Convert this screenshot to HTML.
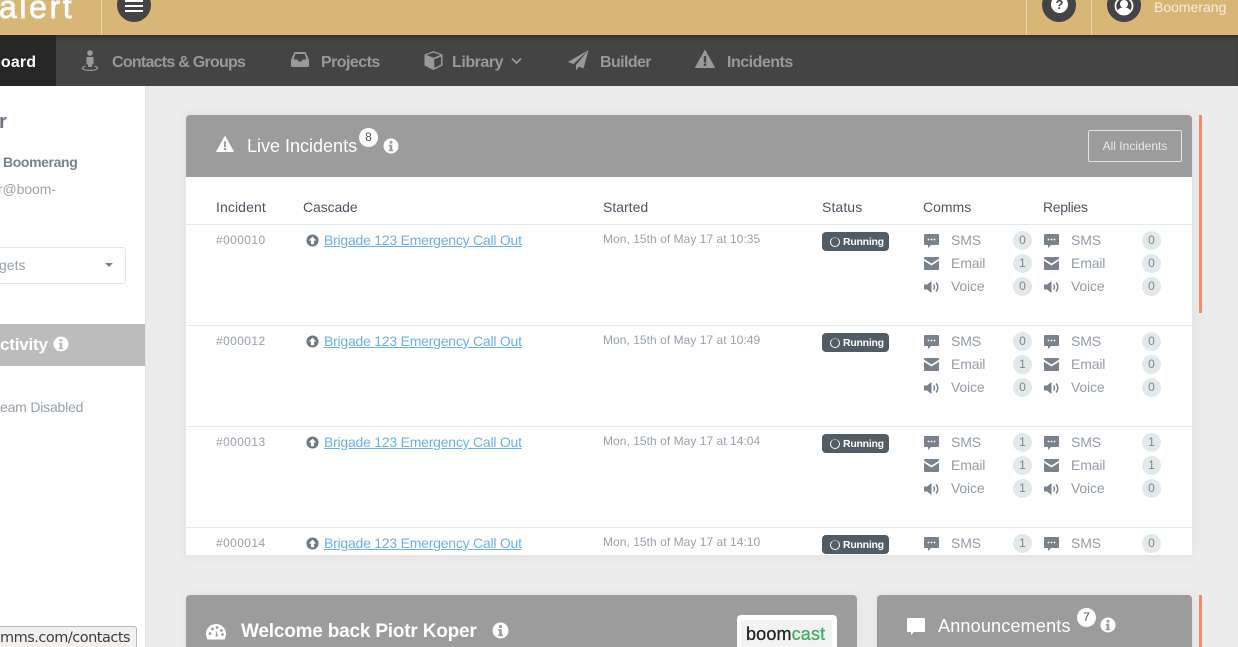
<!DOCTYPE html>
<html><head><meta charset="utf-8"><style>
html{margin:0;padding:0;width:1238px;height:647px;overflow:hidden}
body{margin:0;padding:0;width:1238px;height:647px;position:relative;overflow:hidden;background:#ececec;font-family:"Liberation Sans",sans-serif;color:#4a5560}
.a,.t,svg.i{position:absolute}
.t{white-space:nowrap;line-height:20px}
.row{position:absolute;left:0;width:1006px;height:101px;border-top:1px solid #e4e9ec}
.id{left:30px;top:5px;font-size:12px;color:#98a0a8;letter-spacing:.4px}
.lk{left:138px;top:5px;font-size:14px;color:#6cb0e8;text-decoration:underline;letter-spacing:-.23px}
.dt{left:417px;top:4px;font-size:12px;color:#98a1aa;letter-spacing:.04px}
.badge{position:absolute;left:636px;top:7px;width:67px;height:19px;background:#515c65;border-radius:4px}
.badge b{position:absolute;left:21px;top:0;font-size:10.5px;line-height:20px;color:#fff;font-weight:bold;letter-spacing:-.25px}
.badge i{position:absolute;left:8px;top:5px;width:8px;height:8px;border:1.5px solid #fff;border-radius:50%;border-top-color:#9aa3aa}
.l{font-size:14px;color:#949ca5;letter-spacing:-.15px;margin-top:-1px}
.n{position:absolute;width:19px;height:19px;border-radius:50%;background:#e3e8eb;color:#7d8791;font-size:12px;line-height:18px;text-align:center;margin-top:1px}
.h{top:82px;font-size:14px;color:#4d5761}
.nav{top:53px;font-size:16px;font-weight:bold;color:#999}
</style></head><body>
<svg width="0" height="0" style="position:absolute"><defs>
<symbol id="sms" viewBox="0 0 15 14"><path d="M1 0h13a1 1 0 0 1 1 1v9a1 1 0 0 1-1 1H7l-3 3v-3H1a1 1 0 0 1-1-1V1a1 1 0 0 1 1-1z" fill="#7a838d"/><circle cx="4.500" cy="5.500" r=".9" fill="#fff"/><circle cx="7.500" cy="5.500" r=".9" fill="#fff"/><circle cx="10.500" cy="5.500" r=".9" fill="#fff"/></symbol>
<symbol id="mail" viewBox="0 0 15 13"><path d="M1 0h13a1 1 0 0 1 1 1v.8L7.500 6.500 0 1.800V1a1 1 0 0 1 1-1z" fill="#7a838d"/><path d="M0 3.800l7.500 4.700L15 3.800V12a1 1 0 0 1-1 1H1a1 1 0 0 1-1-1z" fill="#7a838d"/></symbol>
<symbol id="vol" viewBox="0 0 15 12"><path d="M0 3.500h3L7.500 0v12L3 8.500H0z" fill="#7a838d"/><path d="M9.500 3.500c1.300 1.400 1.300 3.600 0 5" stroke="#7a838d" stroke-width="1.500" fill="none"/><path d="M12 1.500c2.300 2.500 2.300 6.500 0 9" stroke="#7a838d" stroke-width="1.500" fill="none"/></symbol>
<symbol id="up" viewBox="0 0 14 14"><circle cx="7" cy="7" r="6.500" fill="#6e7882"/><path d="M7 2.800L11 7H8.700v4H5.300V7H3z" fill="#fff"/></symbol>
<symbol id="info" viewBox="0 0 16 16"><circle cx="8" cy="8" r="7.500" fill="#fff"/><circle cx="8" cy="4.200" r="1.500" fill="var(--c,#9c9c9c)"/><path d="M5.800 6.800h3.400v5h1.100v1.500H5.700v-1.500h1V8.300h-.9z" fill="var(--c,#9c9c9c)"/></symbol>
<symbol id="warn" viewBox="0 0 20 18"><path d="M10 .5L19.500 17.500H.5z" fill="currentColor" stroke="currentColor" stroke-linejoin="round"/><rect x="8.800" y="6" width="2.400" height="6.500" fill="var(--c)"/><rect x="8.800" y="13.500" width="2.400" height="2.400" fill="var(--c)"/></symbol>
</defs></svg>

<!-- top bar -->
<div class="a" style="left:0;top:0;width:1238px;height:35px;background:#d8b676"></div>
<div class="t" style="left:-1px;top:-13px;font-size:32px;line-height:40px;color:#fff;letter-spacing:2.6px;-webkit-text-stroke:.7px #fff">alert</div>
<div class="a" style="left:101px;top:0;width:1px;height:35px;background:#e9d5ad"></div>
<div class="a" style="left:117px;top:-12px;width:34px;height:34px;border-radius:50%;background:#444"></div>
<div class="a" style="left:125px;top:0;width:18px;height:2px;background:#fff"></div>
<div class="a" style="left:125px;top:5px;width:18px;height:2px;background:#fff"></div>
<div class="a" style="left:125px;top:10px;width:18px;height:2px;background:#fff"></div>
<div class="a" style="left:1026px;top:0;width:1px;height:35px;background:#e9d5ad"></div>
<div class="a" style="left:1042px;top:-12px;width:34px;height:34px;border-radius:50%;background:#444"></div>
<div class="a" style="left:1051px;top:-4px;width:17px;height:17px;border-radius:50%;background:#fff"></div>
<div class="t" style="left:1051px;top:-5px;width:17px;text-align:center;font-size:13px;font-weight:bold;color:#444">?</div>
<div class="a" style="left:1091px;top:0;width:1px;height:35px;background:#e9d5ad"></div>
<div class="a" style="left:1107px;top:-12px;width:34px;height:34px;border-radius:50%;background:#444"></div>
<svg class="i" style="left:1114px;top:-4px" width="20" height="20" viewBox="0 0 20 20"><circle cx="10" cy="10" r="8.500" fill="none" stroke="#fff" stroke-width="1.800"/><circle cx="10" cy="8" r="4" fill="#fff"/><path d="M3.500 15c1-2.500 3-3.500 6.500-3.500s5.500 1 6.500 3.500a8 8 0 0 1-13 0z" fill="#fff"/></svg>
<div class="t" style="left:1154px;top:-3px;font-size:14px;color:#f5eedd">Boomerang</div>

<!-- nav -->
<div class="a" style="left:0;top:35px;width:1238px;height:51px;background:#444;box-shadow:inset 0 4px 4px -2px #2e2e2e"></div>
<div class="a" style="left:0;top:35px;width:56px;height:51px;background:#262626"></div>
<div class="t" style="left:-9px;top:53px;font-size:16px;font-weight:bold;color:#fff;letter-spacing:.15px">board</div>
<svg class="i" style="left:81px;top:50px" width="18" height="22" viewBox="0 0 18 22"><circle cx="9" cy="3" r="2.800" fill="#999"/><path d="M5.500 7h7v7.500h-1.500V17H7v-2.500H5.500z" fill="#999"/><path d="M4.500 15.500C2 16.300.8 17.200.8 18.200c0 1.500 3.600 2.800 8.200 2.800s8.200-1.300 8.200-2.800c0-1-1.200-1.900-3.700-2.700v1.200c1.500.4 2.200 1 2.200 1.500 0 .8-2.700 1.600-6.700 1.600s-6.700-.8-6.700-1.600c0-.5.700-1.100 2.200-1.500z" fill="#999"/></svg>
<div class="t nav" style="left:112px;letter-spacing:-.74px">Contacts &amp; Groups</div>
<svg class="i" style="left:291px;top:52px" width="18" height="15" viewBox="0 0 18 15"><path d="M3.500 0h11L18 8v5.500a1.500 1.500 0 0 1-1.500 1.500h-15A1.500 1.500 0 0 1 0 13.500V8zM4.500 2L2.500 7.500h4l1 2h3l1-2h4L13.500 2z" fill="#999" fill-rule="evenodd"/></svg>
<div class="t nav" style="left:321px;letter-spacing:-.55px">Projects</div>
<svg class="i" style="left:424px;top:50px" width="19" height="21" viewBox="0 0 19 21"><path d="M9.500 1L18.500 4.500V15.500L9.500 20 .5 15.500V4.500z" fill="#999"/><path d="M2.500 5l7 2.800 7-2.800-7-2.500z" fill="#444"/><path d="M10.300 9.300l6.700-2.700v8L10.300 18z" fill="#444"/></svg>
<div class="t nav" style="left:452px;letter-spacing:-.45px">Library</div>
<svg class="i" style="left:511px;top:57px" width="11" height="8" viewBox="0 0 11 8"><path d="M1 1.500l4.500 4.500L10 1.500" fill="none" stroke="#999" stroke-width="1.800"/></svg>
<svg class="i" style="left:568px;top:50px" width="21" height="21" viewBox="0 0 21 21"><path d="M20.500 0L0 12l5.500 2L20.500 0 8 15v5.500l3-4 4.500 2z" fill="#999"/></svg>
<div class="t nav" style="left:600px;letter-spacing:-.6px">Builder</div>
<svg class="i" style="left:695px;top:50px;color:#999;--c:#444" width="20" height="18"><use href="#warn"/></svg>
<div class="t nav" style="left:727px;letter-spacing:-.5px">Incidents</div>

<!-- sidebar -->
<div class="a" style="left:0;top:86px;width:145px;height:561px;background:#fff;border-right:1px solid #e4e4e4"></div>
<div class="t" style="left:-1px;top:112px;font-size:20px;font-weight:bold;color:#6d7781">r</div>
<div class="t" style="left:3px;top:152px;font-size:14px;font-weight:bold;color:#79838d;letter-spacing:-.38px">Boomerang</div>
<div class="t" style="left:-2px;top:179px;font-size:14px;color:#9aa2aa;letter-spacing:-.1px">r@boom-</div>
<div class="a" style="left:-10px;top:247px;width:134px;height:35px;border:1px solid #e4e8eb;border-radius:3px;background:#fff"></div>
<div class="t" style="left:-1px;top:255px;font-size:14px;color:#9aa2aa">gets</div>
<div class="a" style="left:105px;top:263px;width:0;height:0;border-left:4px solid transparent;border-right:4px solid transparent;border-top:4px solid #79838d"></div>
<div class="a" style="left:0;top:324px;width:145px;height:42px;background:#bcbcbc"></div>
<div class="t" style="left:0;top:335px;font-size:17px;font-weight:bold;color:#fff;letter-spacing:-.2px">ctivity</div>
<svg class="i" style="left:53px;top:336px;--c:#bcbcbc" width="16" height="16"><use href="#info"/></svg>
<div class="t" style="left:0;top:397px;font-size:14px;color:#98a0a8;letter-spacing:-.2px">eam Disabled</div>

<!-- live incidents panel -->
<div class="a" style="left:186px;top:115px;width:1006px;height:440px;background:#fff;border-radius:4px 4px 0 0;overflow:hidden;box-shadow:0 0 14px rgba(0,0,0,.06)">
  <div class="a" style="left:0;top:0;width:1006px;height:62px;background:#9c9c9c"></div>
  <svg class="i" style="left:30px;top:21px;color:#fff;--c:#9c9c9c" width="18" height="16"><use href="#warn"/></svg>
  <div class="t" style="left:61px;top:21px;font-size:18px;color:#fff">Live Incidents</div>
  <div class="a" style="left:173px;top:13px;width:19px;height:19px;border-radius:50%;background:#fff;color:#4a5560;font-size:12px;line-height:18px;text-align:center">8</div>
  <svg class="i" style="left:197px;top:23px" width="16" height="16"><use href="#info"/></svg>
  <div class="a" style="left:902px;top:15px;width:92px;height:30px;border:1px solid #e0e4e6;border-radius:2px;color:#e6e9ea;font-size:12px;line-height:30px;text-align:center">All Incidents</div>

  <div class="t h" style="left:30px;letter-spacing:.1px">Incident</div>
  <div class="t h" style="left:117px;letter-spacing:-.1px">Cascade</div>
  <div class="t h" style="left:417px">Started</div>
  <div class="t h" style="left:636px;letter-spacing:.1px">Status</div>
  <div class="t h" style="left:737px">Comms</div>
  <div class="t h" style="left:857px;letter-spacing:-.3px">Replies</div>

  <div class="row" style="top:109px">
    <div class="t id">#000010</div><svg class="i" style="left:120px;top:9px" width="13" height="13"><use href="#up"/></svg><div class="t lk">Brigade 123 Emergency Call Out</div><div class="t dt">Mon, 15th of May 17 at 10:35</div>
    <div class="badge"><i></i><b>Running</b></div>
    <svg class="i" style="left:738px;top:9px" width="15" height="14"><use href="#sms"/></svg><div class="t l" style="left:765px;top:6px">SMS</div><div class="n" style="left:827px;top:5px">0</div>
    <svg class="i" style="left:738px;top:32px" width="15" height="13"><use href="#mail"/></svg><div class="t l" style="left:765px;top:29px">Email</div><div class="n" style="left:827px;top:28px">1</div>
    <svg class="i" style="left:738px;top:56px" width="15" height="12"><use href="#vol"/></svg><div class="t l" style="left:765px;top:52px">Voice</div><div class="n" style="left:827px;top:51px">0</div>
    <svg class="i" style="left:858px;top:9px" width="15" height="14"><use href="#sms"/></svg><div class="t l" style="left:885px;top:6px">SMS</div><div class="n" style="left:956px;top:5px">0</div>
    <svg class="i" style="left:858px;top:32px" width="15" height="13"><use href="#mail"/></svg><div class="t l" style="left:885px;top:29px">Email</div><div class="n" style="left:956px;top:28px">0</div>
    <svg class="i" style="left:858px;top:56px" width="15" height="12"><use href="#vol"/></svg><div class="t l" style="left:885px;top:52px">Voice</div><div class="n" style="left:956px;top:51px">0</div>
  </div>
  <div class="row" style="top:210px">
    <div class="t id">#000012</div><svg class="i" style="left:120px;top:9px" width="13" height="13"><use href="#up"/></svg><div class="t lk">Brigade 123 Emergency Call Out</div><div class="t dt">Mon, 15th of May 17 at 10:49</div>
    <div class="badge"><i></i><b>Running</b></div>
    <svg class="i" style="left:738px;top:9px" width="15" height="14"><use href="#sms"/></svg><div class="t l" style="left:765px;top:6px">SMS</div><div class="n" style="left:827px;top:5px">0</div>
    <svg class="i" style="left:738px;top:32px" width="15" height="13"><use href="#mail"/></svg><div class="t l" style="left:765px;top:29px">Email</div><div class="n" style="left:827px;top:28px">1</div>
    <svg class="i" style="left:738px;top:56px" width="15" height="12"><use href="#vol"/></svg><div class="t l" style="left:765px;top:52px">Voice</div><div class="n" style="left:827px;top:51px">0</div>
    <svg class="i" style="left:858px;top:9px" width="15" height="14"><use href="#sms"/></svg><div class="t l" style="left:885px;top:6px">SMS</div><div class="n" style="left:956px;top:5px">0</div>
    <svg class="i" style="left:858px;top:32px" width="15" height="13"><use href="#mail"/></svg><div class="t l" style="left:885px;top:29px">Email</div><div class="n" style="left:956px;top:28px">0</div>
    <svg class="i" style="left:858px;top:56px" width="15" height="12"><use href="#vol"/></svg><div class="t l" style="left:885px;top:52px">Voice</div><div class="n" style="left:956px;top:51px">0</div>
  </div>
  <div class="row" style="top:311px">
    <div class="t id">#000013</div><svg class="i" style="left:120px;top:9px" width="13" height="13"><use href="#up"/></svg><div class="t lk">Brigade 123 Emergency Call Out</div><div class="t dt">Mon, 15th of May 17 at 14:04</div>
    <div class="badge"><i></i><b>Running</b></div>
    <svg class="i" style="left:738px;top:9px" width="15" height="14"><use href="#sms"/></svg><div class="t l" style="left:765px;top:6px">SMS</div><div class="n" style="left:827px;top:5px">1</div>
    <svg class="i" style="left:738px;top:32px" width="15" height="13"><use href="#mail"/></svg><div class="t l" style="left:765px;top:29px">Email</div><div class="n" style="left:827px;top:28px">1</div>
    <svg class="i" style="left:738px;top:56px" width="15" height="12"><use href="#vol"/></svg><div class="t l" style="left:765px;top:52px">Voice</div><div class="n" style="left:827px;top:51px">1</div>
    <svg class="i" style="left:858px;top:9px" width="15" height="14"><use href="#sms"/></svg><div class="t l" style="left:885px;top:6px">SMS</div><div class="n" style="left:956px;top:5px">1</div>
    <svg class="i" style="left:858px;top:32px" width="15" height="13"><use href="#mail"/></svg><div class="t l" style="left:885px;top:29px">Email</div><div class="n" style="left:956px;top:28px">1</div>
    <svg class="i" style="left:858px;top:56px" width="15" height="12"><use href="#vol"/></svg><div class="t l" style="left:885px;top:52px">Voice</div><div class="n" style="left:956px;top:51px">0</div>
  </div>
  <div class="row" style="top:412px">
    <div class="t id">#000014</div><svg class="i" style="left:120px;top:9px" width="13" height="13"><use href="#up"/></svg><div class="t lk">Brigade 123 Emergency Call Out</div><div class="t dt">Mon, 15th of May 17 at 14:10</div>
    <div class="badge"><i></i><b>Running</b></div>
    <svg class="i" style="left:738px;top:9px" width="15" height="14"><use href="#sms"/></svg><div class="t l" style="left:765px;top:6px">SMS</div><div class="n" style="left:827px;top:5px">1</div>
    <svg class="i" style="left:858px;top:9px" width="15" height="14"><use href="#sms"/></svg><div class="t l" style="left:885px;top:6px">SMS</div><div class="n" style="left:956px;top:5px">0</div>
  </div>
</div>
<div class="a" style="left:1199px;top:115px;width:3px;height:198px;background:#ec8c68"></div>

<!-- welcome panel -->
<div class="a" style="left:186px;top:595px;width:671px;height:60px;background:#9c9c9c;border-radius:4px 4px 0 0;box-shadow:0 0 10px rgba(0,0,0,.06)"></div>
<svg class="i" style="left:206px;top:624px" width="20" height="16" viewBox="0 0 20 16"><path d="M10 0a10 10 0 0 1 10 10c0 2-.6 4-1.500 5.500h-17A10 10 0 0 1 0 10 10 10 0 0 1 10 0z" fill="#fff"/><circle cx="4" cy="9.500" r="1.400" fill="#9c9c9c"/><circle cx="6.500" cy="5" r="1.400" fill="#9c9c9c"/><circle cx="11" cy="3.500" r="1.400" fill="#9c9c9c"/><circle cx="15.500" cy="6.500" r="1.400" fill="#9c9c9c"/><circle cx="16.500" cy="10.500" r="1.400" fill="#9c9c9c"/><path d="M10.500 6.500l-1 6h2.500z" fill="#9c9c9c"/></svg>
<div class="t" style="left:241px;top:622px;font-size:19px;font-weight:bold;color:#fff;letter-spacing:-.2px">Welcome back Piotr Koper</div>
<svg class="i" style="left:492px;top:622px" width="17" height="17"><use href="#info"/></svg>
<div class="a" style="left:737px;top:615px;width:100px;height:40px;background:#fff;border-radius:4px"></div>
<div class="a" style="left:741px;top:620px;width:91px;height:30px;background:#f3f3f3"></div>
<div class="t" style="left:746px;top:624px;font-size:18px;color:#222;letter-spacing:.15px;-webkit-text-stroke:.3px"><span>boom</span><span style="color:#3cb05e">cast</span></div>

<!-- announcements panel -->
<div class="a" style="left:877px;top:595px;width:315px;height:60px;background:#9c9c9c;border-radius:4px 4px 0 0;box-shadow:0 0 10px rgba(0,0,0,.06)"></div>
<svg class="i" style="left:907px;top:618px" width="18" height="17" viewBox="0 0 18 17"><path d="M1 0h16a1 1 0 0 1 1 1v12a1 1 0 0 1-1 1H7l-3 3v-3H1a1 1 0 0 1-1-1V1a1 1 0 0 1 1-1z" fill="#fff"/></svg>
<div class="t" style="left:938px;top:616px;font-size:18px;color:#fff;letter-spacing:.2px">Announcements</div>
<div class="a" style="left:1077px;top:608px;width:19px;height:19px;border-radius:50%;background:#fff;color:#4a5560;font-size:12px;line-height:18px;text-align:center">7</div>
<svg class="i" style="left:1100px;top:617px" width="16" height="16"><use href="#info"/></svg>
<div class="a" style="left:1199px;top:595px;width:3px;height:52px;background:#ec8c68"></div>

<!-- status tooltip -->
<div class="a" style="left:-6px;top:626px;width:141px;height:30px;background:#f2f1f0;border:1px solid #b9b9b9;border-radius:3px"></div>
<div class="t" style="left:0;top:628px;font-size:14.500px;color:#3c3c3c;font-family:'DejaVu Sans',sans-serif;letter-spacing:-.5px">mms.com/contacts</div>
</body></html>
